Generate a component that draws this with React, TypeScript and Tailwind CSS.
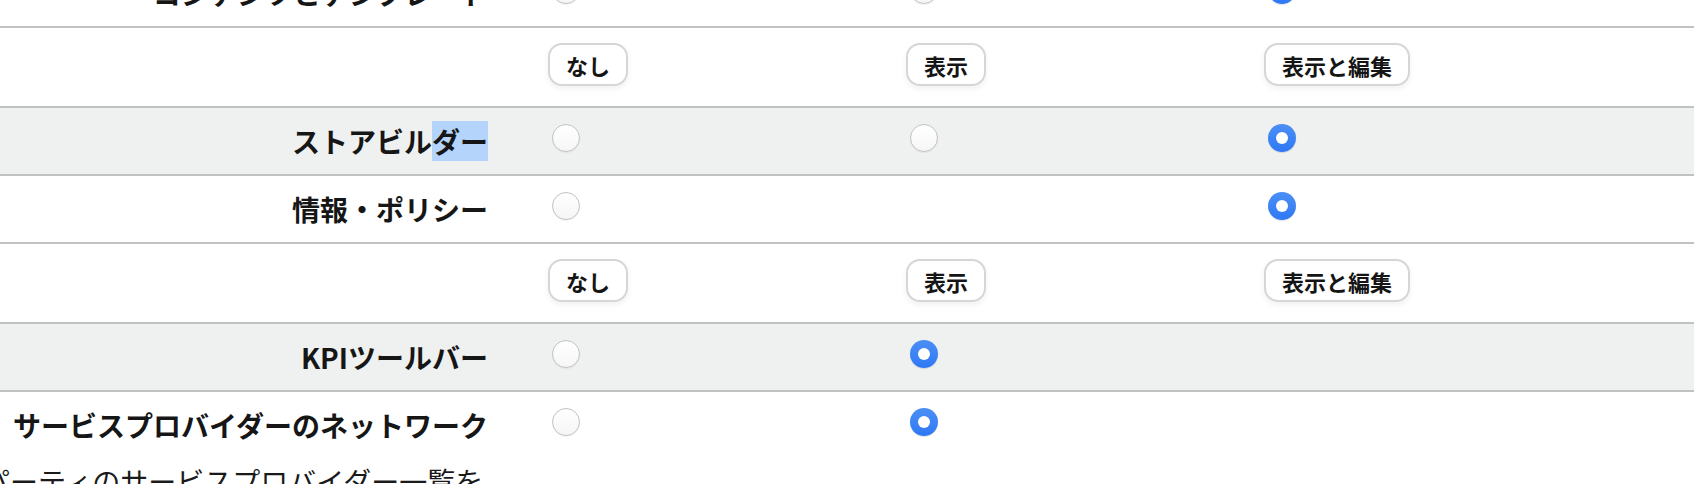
import React from "react";

type Cell = "on" | "off" | null;

type Row =
  | { kind: "perm"; label: React.ReactNode; cells: Cell[]; shaded?: boolean }
  | { kind: "head" };

const rows: Row[] = [
  { kind: "perm", label: "コンテンツとテンプレート", cells: ["off", "off", "on"] },
  { kind: "head" },
  {
    kind: "perm",
    label: (
      <>
        ストアビル<span className="bg-[#b4d4fb]">ダー</span>
      </>
    ),
    cells: ["off", "off", "on"],
    shaded: true,
  },
  { kind: "perm", label: "情報・ポリシー", cells: ["off", null, "on"] },
  { kind: "head" },
  { kind: "perm", label: "KPIツールバー", cells: ["off", "on", null], shaded: true },
  { kind: "perm", label: "サービスプロバイダーのネットワーク", cells: ["off", "on", null] },
];

const levels = ["なし", "表示", "表示と編集"];

function Radio({ checked }: { checked: boolean }) {
  if (checked) {
    return (
      <span className="ml-[4px] -mt-[6px] flex h-[28px] w-[28px] items-center justify-center rounded-full bg-gradient-to-b from-[#4b8ff6] to-[#2f78f4] shadow-[0_1px_1px_rgba(0,0,0,0.12)]">
        <span className="h-[12px] w-[12px] rounded-full bg-white" />
      </span>
    );
  }
  return (
    <span className="ml-[4px] -mt-[6px] block h-[28px] w-[28px] rounded-full border-[1.5px] border-[#c2c2c2] bg-gradient-to-b from-white to-[#f6f6f6] shadow-[0_1px_1px_rgba(0,0,0,0.06)]" />
  );
}

function LevelButton({ text }: { text: string }) {
  return (
    <button className="h-[43px] rounded-[14px] border-2 border-[#d5d7d6] bg-white px-[16px] text-[22px] font-bold leading-none text-[#151515] shadow-[0_3px_6px_rgba(0,0,0,0.06)]">
      {text}
    </button>
  );
}

export default function App() {
  return (
    <div
      className="min-h-[484px] overflow-hidden bg-white text-[#161616]"
      style={{ fontFamily: '"Noto Sans CJK JP", "Noto Sans", sans-serif' }}
    >
      <div className="-mt-[40px]">
        {rows.map((row, i) => {
          const last = i === rows.length - 1;
          if (row.kind === "head") {
            return (
              <div
                key={i}
                className="grid h-[80px] grid-cols-[518px_358px_358px_1fr] border-b-2 border-[#c0c2c1] bg-white pt-[15px]"
              >
                <div />
                {levels.map((l) => (
                  <div key={l} className="pl-[30px]">
                    <LevelButton text={l} />
                  </div>
                ))}
              </div>
            );
          }
          return (
            <div
              key={i}
              className={`grid grid-cols-[518px_358px_358px_1fr] items-center ${
                last ? "h-[66px]" : "h-[68px] border-b-2 border-[#c0c2c1]"
              } ${row.shaded ? "bg-[#eff0f0]" : "bg-white"}`}
            >
              <div className="whitespace-nowrap pr-[30px] text-right text-[28px] font-bold leading-none">
                {row.label}
              </div>
              {row.cells.map((c, j) => (
                <div key={j} className="flex items-center pl-[30px]">
                  {c && <Radio checked={c === "on"} />}
                </div>
              ))}
            </div>
          );
        })}
      </div>
      <p className="-ml-[18px] mt-[9px] whitespace-nowrap text-[28px] leading-none text-[#1a1a1a]">
        パーティのサービスプロバイダー一覧を
      </p>
    </div>
  );
}
